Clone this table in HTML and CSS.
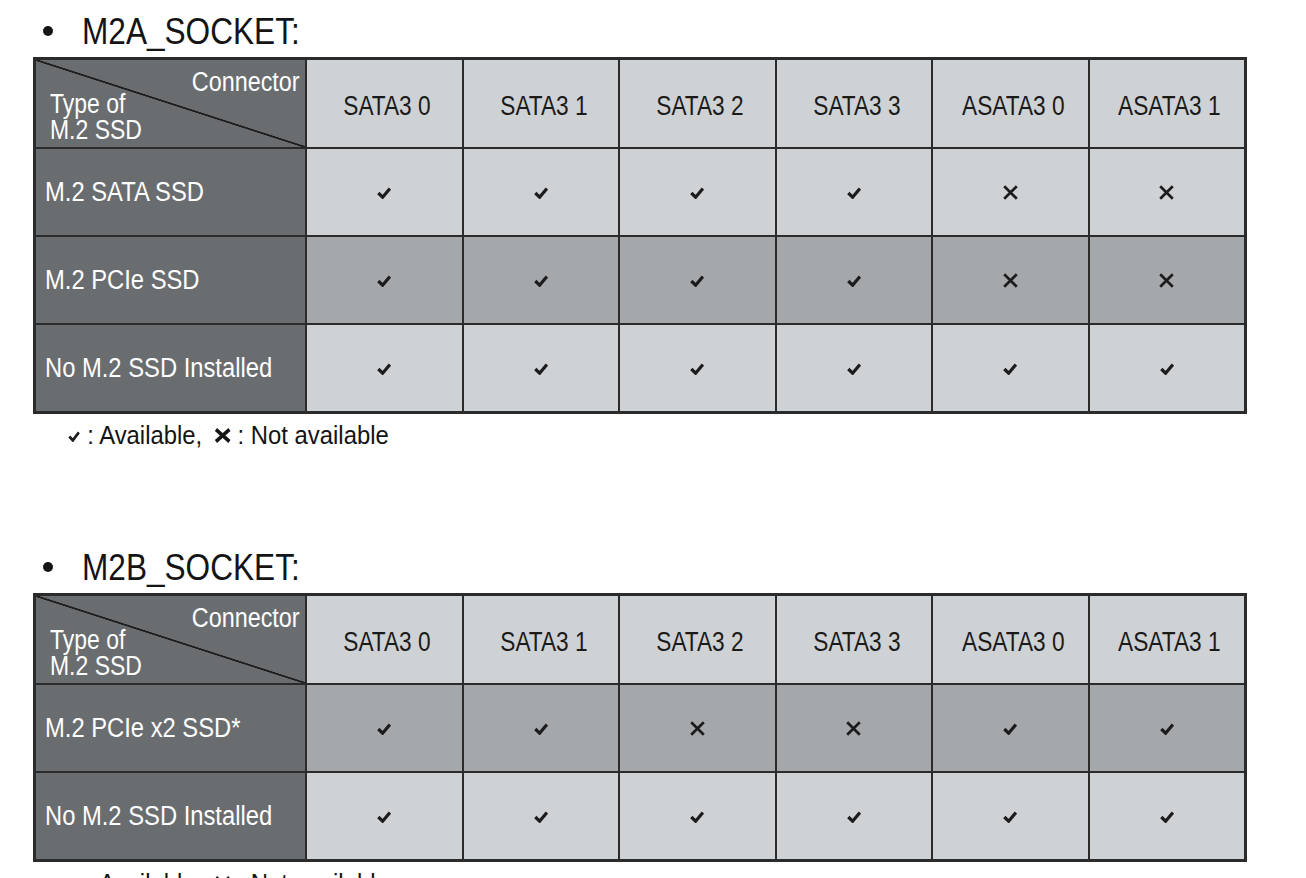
FILE: index.html
```html
<!DOCTYPE html>
<html lang="en">
<head>
<meta charset="utf-8">
<title>M.2 socket SATA availability</title>
<link rel="stylesheet" href="styles.css">
</head>
<body>
<svg class="defs" width="0" height="0" aria-hidden="true">
  <defs>
    <symbol id="ok" viewBox="0 0 14 12"><path d="M1.3 6 L5.6 10.2 L12.9 1.5" fill="none" stroke="#1c1c1c" stroke-width="3.2" stroke-linejoin="miter"/></symbol>
    <symbol id="no" viewBox="0 0 17 17"><path d="M2.2 2.2 L14.8 14.8 M14.8 2.2 L2.2 14.8" fill="none" stroke="#1c1c1c" stroke-width="2.7"/></symbol>
    <symbol id="nob" viewBox="0 0 18 14"><path d="M2 1.5 L16 12.5 M16 1.5 L2 12.5" fill="none" stroke="#151515" stroke-width="3.6"/></symbol>
  </defs>
</svg>

<section class="section first">
  <h2 class="title"><span class="bullet"></span><span class="tt">M2A_SOCKET:</span></h2>
  <div class="grid rows3">
    <div class="corner"><span class="conn">Connector</span><span class="type">Type of<br>M.2 SSD</span></div>
    <div class="head"><span class="t">SATA3 0</span></div><div class="head"><span class="t">SATA3 1</span></div><div class="head"><span class="t">SATA3 2</span></div><div class="head"><span class="t">SATA3 3</span></div><div class="head"><span class="t">ASATA3 0</span></div><div class="head"><span class="t">ASATA3 1</span></div>

    <div class="label"><span class="tl">M.2 SATA SSD</span></div>
    <div class="cell"><svg class="ok"><use href="#ok"/></svg></div>
    <div class="cell"><svg class="ok"><use href="#ok"/></svg></div>
    <div class="cell"><svg class="ok"><use href="#ok"/></svg></div>
    <div class="cell"><svg class="ok"><use href="#ok"/></svg></div>
    <div class="cell"><svg class="no"><use href="#no"/></svg></div>
    <div class="cell"><svg class="no"><use href="#no"/></svg></div>

    <div class="label"><span class="tl">M.2 PCIe SSD</span></div>
    <div class="cell dark"><svg class="ok"><use href="#ok"/></svg></div>
    <div class="cell dark"><svg class="ok"><use href="#ok"/></svg></div>
    <div class="cell dark"><svg class="ok"><use href="#ok"/></svg></div>
    <div class="cell dark"><svg class="ok"><use href="#ok"/></svg></div>
    <div class="cell dark"><svg class="no"><use href="#no"/></svg></div>
    <div class="cell dark"><svg class="no"><use href="#no"/></svg></div>

    <div class="label"><span class="tl">No M.2 SSD Installed</span></div>
    <div class="cell"><svg class="ok"><use href="#ok"/></svg></div>
    <div class="cell"><svg class="ok"><use href="#ok"/></svg></div>
    <div class="cell"><svg class="ok"><use href="#ok"/></svg></div>
    <div class="cell"><svg class="ok"><use href="#ok"/></svg></div>
    <div class="cell"><svg class="ok"><use href="#ok"/></svg></div>
    <div class="cell"><svg class="ok"><use href="#ok"/></svg></div>
  </div>
  <p class="legend"><span class="lg"><svg class="lok"><use href="#ok"/></svg>: Available, <svg class="lno"><use href="#nob"/></svg>: Not available</span></p>
</section>

<section class="section second">
  <h2 class="title"><span class="bullet"></span><span class="tt">M2B_SOCKET:</span></h2>
  <div class="grid rows2">
    <div class="corner"><span class="conn">Connector</span><span class="type">Type of<br>M.2 SSD</span></div>
    <div class="head"><span class="t">SATA3 0</span></div><div class="head"><span class="t">SATA3 1</span></div><div class="head"><span class="t">SATA3 2</span></div><div class="head"><span class="t">SATA3 3</span></div><div class="head"><span class="t">ASATA3 0</span></div><div class="head"><span class="t">ASATA3 1</span></div>

    <div class="label"><span class="tl">M.2 PCIe x2 SSD*</span></div>
    <div class="cell dark"><svg class="ok"><use href="#ok"/></svg></div>
    <div class="cell dark"><svg class="ok"><use href="#ok"/></svg></div>
    <div class="cell dark"><svg class="no"><use href="#no"/></svg></div>
    <div class="cell dark"><svg class="no"><use href="#no"/></svg></div>
    <div class="cell dark"><svg class="ok"><use href="#ok"/></svg></div>
    <div class="cell dark"><svg class="ok"><use href="#ok"/></svg></div>

    <div class="label"><span class="tl">No M.2 SSD Installed</span></div>
    <div class="cell"><svg class="ok"><use href="#ok"/></svg></div>
    <div class="cell"><svg class="ok"><use href="#ok"/></svg></div>
    <div class="cell"><svg class="ok"><use href="#ok"/></svg></div>
    <div class="cell"><svg class="ok"><use href="#ok"/></svg></div>
    <div class="cell"><svg class="ok"><use href="#ok"/></svg></div>
    <div class="cell"><svg class="ok"><use href="#ok"/></svg></div>
  </div>
  <p class="legend"><span class="lg"><svg class="lok"><use href="#ok"/></svg>: Available, <svg class="lno"><use href="#nob"/></svg>: Not available</span></p>
</section>
</body>
</html>
```

FILE: styles.css
```css
html, body {
  margin: 0;
  padding: 0;
  background: #ffffff;
}
body {
  font-family: "Liberation Sans", Arial, sans-serif;
  color: #141414;
  width: 1306px;
  height: 878px;
  overflow: hidden;
}
.defs {
  position: absolute;
  width: 0;
  height: 0;
}
.section.first {
  padding-top: 10px;
}
.section.second {
  margin-top: 96px;
}
.title {
  margin: 0;
  height: 44px;
  line-height: 44px;
  font-size: 37px;
  font-weight: normal;
  display: flex;
  align-items: center;
  padding-left: 43px;
}
.tt {
  display: inline-block;
  transform: scaleX(0.854);
  transform-origin: left center;
  white-space: nowrap;
}
.bullet {
  display: inline-block;
  flex: none;
  width: 10px;
  height: 10px;
  border-radius: 50%;
  background: #141414;
  margin-right: 29px;
  margin-top: -3px;
}
.grid {
  margin: 3px 0 0 33px;
  width: 1214px;
  box-sizing: border-box;
  display: grid;
  grid-template-columns: 269px repeat(6, 1fr);
  gap: 2px;
  background: #2b2b2b;
  border: 3px solid #2b2b2b;
}
.grid.rows3 {
  grid-template-rows: 87px repeat(3, 86px);
}
.grid.rows2 {
  grid-template-rows: 87px repeat(2, 86px);
}
.corner {
  display: grid;
  color: #ffffff;
  font-size: 27px;
  line-height: 26px;
  padding: 9px 5px 4px 14px;
  background: linear-gradient(to top right, #6a6d70 calc(50% - 1.2px), #1e1e1e calc(50% - 0.6px), #1e1e1e calc(50% + 0.6px), #6a6d70 calc(50% + 1.2px));
}
.conn, .type {
  grid-area: 1 / 1;
  white-space: nowrap;
}
.conn {
  justify-self: end;
  align-self: start;
  transform: scaleX(0.865);
  transform-origin: right center;
}
.type {
  justify-self: start;
  align-self: end;
  transform: scaleX(0.85);
  transform-origin: left center;
}
.head {
  background: #cfd2d5;
  display: flex;
  align-items: center;
  justify-content: center;
  padding: 4px 0 0 6px;
  font-size: 28px;
  color: #1a1a1a;
}
.t {
  display: inline-block;
  white-space: nowrap;
  transform: scaleX(0.81);
  transform-origin: center;
}
.label {
  background: #6a6d70;
  color: #ffffff;
  display: flex;
  align-items: center;
  padding-left: 9px;
  font-size: 27px;
}
.tl {
  display: inline-block;
  white-space: nowrap;
  transform: scaleX(0.88);
  transform-origin: left center;
}
.cell {
  background: #cfd2d5;
  display: flex;
  align-items: center;
  justify-content: center;
}
.cell.dark {
  background: #a5a8ab;
}
.ok {
  width: 14px;
  height: 12px;
  margin-top: 2px;
}
.no {
  width: 17px;
  height: 17px;
}
.legend {
  margin: 6px 0 0 67px;
  height: 30px;
  line-height: 30px;
  font-size: 26.5px;
  display: flex;
  align-items: center;
}
.lg {
  display: inline-flex;
  align-items: center;
  white-space: pre;
  transform: scaleX(0.9);
  transform-origin: left center;
}
.lok {
  width: 15.5px;
  height: 11px;
  margin-right: 7px;
  margin-top: 3px;
}
.lno {
  width: 20px;
  height: 15px;
  margin-left: 5px;
  margin-right: 7px;
  margin-top: 1px;
}
```
